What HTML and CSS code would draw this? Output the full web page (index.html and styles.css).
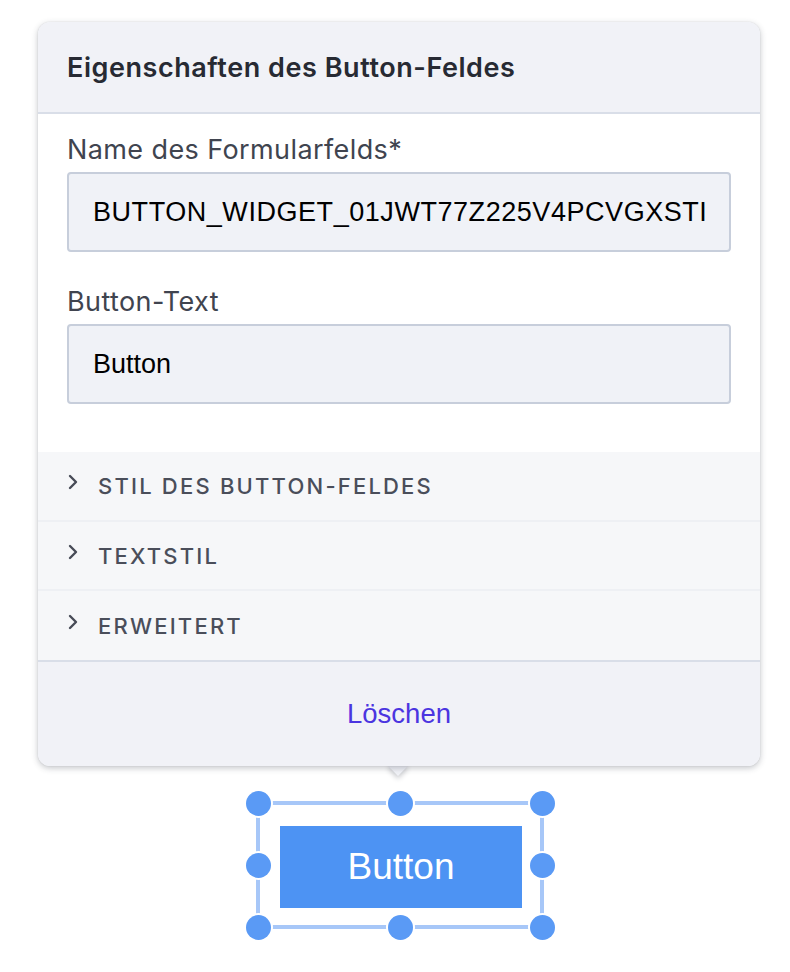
FILE: index.html
```html
<!DOCTYPE html>
<html lang="de">
<head>
<meta charset="utf-8">
<title>Eigenschaften des Button-Feldes</title>
<link rel="stylesheet" href="styles.css">
</head>
<body>
<div class="stage">
  <div class="popover">
    <div class="card">
      <div class="card-header">Eigenschaften des Button-Feldes</div>
      <div class="card-body">
        <label class="field-label">Name des Formularfelds*</label>
        <div class="field-input wide">BUTTON_WIDGET_01JWT77Z225V4PCVGXSTI</div>
        <label class="field-label second">Button-Text</label>
        <div class="field-input">Button</div>
      </div>
      <div class="sections">
        <div class="section-row">
          <svg class="chev" width="10" height="16" viewBox="0 0 10 16"><path d="M2 2 L8 8 L2 14" fill="none" stroke="#474b57" stroke-width="2.4" stroke-linecap="round" stroke-linejoin="round"/></svg>
          <span>STIL DES BUTTON-FELDES</span>
        </div>
        <div class="section-row">
          <svg class="chev" width="10" height="16" viewBox="0 0 10 16"><path d="M2 2 L8 8 L2 14" fill="none" stroke="#474b57" stroke-width="2.4" stroke-linecap="round" stroke-linejoin="round"/></svg>
          <span>TEXTSTIL</span>
        </div>
        <div class="section-row">
          <svg class="chev" width="10" height="16" viewBox="0 0 10 16"><path d="M2 2 L8 8 L2 14" fill="none" stroke="#474b57" stroke-width="2.4" stroke-linecap="round" stroke-linejoin="round"/></svg>
          <span>ERWEITERT</span>
        </div>
      </div>
      <div class="card-footer"><span class="delete">Löschen</span></div>
    </div>
    <div class="arrow"></div>
  </div>

  <div class="selection">
    <div class="sel-box">
      <div class="widget-btn">Button</div>
    </div>
    <span class="handle h-tl"></span>
    <span class="handle h-tm"></span>
    <span class="handle h-tr"></span>
    <span class="handle h-ml"></span>
    <span class="handle h-mr"></span>
    <span class="handle h-bl"></span>
    <span class="handle h-bm"></span>
    <span class="handle h-br"></span>
  </div>
</div>
</body>
</html>
```

FILE: styles.css
```css
* { box-sizing: border-box; }

html, body {
  margin: 0;
  padding: 0;
  background: #ffffff;
}

body {
  min-height: 972px;
  font-family: Inter, "Noto Sans", "Liberation Sans", sans-serif;
  color: #40444f;
}

.stage {
  width: 790px;
  padding-top: 22px;
  padding-bottom: 40px;
  display: flex;
  flex-direction: column;
  align-items: center;
}

.popover {
  position: relative;
  width: 722px;
  margin-left: 8px;
}

.card {
  position: relative;
  z-index: 2;
  width: 722px;
  border-radius: 12px;
  overflow: hidden;
  background: #ffffff;
  box-shadow: 0 2px 6px rgba(40, 45, 60, 0.28), 0 0 1px rgba(40, 45, 60, 0.25);
}

.card-header {
  height: 92px;
  padding-left: 29px;
  display: flex;
  align-items: center;
  background: #f1f2f7;
  border-bottom: 2px solid #d9dee8;
  font-size: 27px;
  font-weight: 600;
  color: #272a33;
  letter-spacing: 0.55px;
}

.card-body {
  padding: 18px 29px 48px;
  display: flex;
  flex-direction: column;
}

.field-label {
  display: block;
  font-size: 27px;
  line-height: 36px;
  margin-bottom: 4px;
  color: #40444f;
  letter-spacing: 0.4px;
}

.field-label.second {
  margin-top: 32px;
}

.field-input {
  height: 80px;
  padding: 0 24px;
  display: flex;
  align-items: center;
  background: #f0f2f7;
  border: 2px solid #c7cedb;
  border-radius: 4px;
  font-family: "Liberation Sans", Arial, sans-serif;
  font-size: 27px;
  color: #000000;
  white-space: nowrap;
  overflow: hidden;
}

.field-input.wide {
  letter-spacing: 0.55px;
}

.sections {
  background: #f6f7f9;
}

.section-row {
  height: 69px;
  padding-left: 30px;
  display: flex;
  align-items: center;
  gap: 20px;
  border-bottom: 2px solid #eef0f4;
  font-size: 22px;
  font-weight: 500;
  letter-spacing: 2.2px;
  color: #4a4e5a;
}

.section-row:first-child {
  height: 70px;
}

.section-row:last-child {
  height: 71px;
  border-bottom: 2px solid #d9dee8;
}

.chev {
  flex: none;
  margin-top: -8px;
}

.card-footer {
  height: 104px;
  display: flex;
  align-items: center;
  justify-content: center;
  background: #f1f2f7;
}

.delete {
  font-family: "Liberation Sans", Arial, sans-serif;
  font-size: 27.5px;
  color: #4b35e0;
}

.arrow {
  position: absolute;
  z-index: 1;
  left: 353px;
  bottom: -7px;
  width: 14px;
  height: 14px;
  background: #f1f2f7;
  transform: rotate(45deg);
  box-shadow: 2px 2px 5px rgba(40, 45, 60, 0.25);
}

.selection {
  position: relative;
  margin-top: 35px;
  margin-left: 10px;
  width: 288px;
  height: 128px;
}

.sel-box {
  width: 288px;
  height: 128px;
  border: 4px solid #a7c7f8;
  padding: 21px 18px 17px 20px;
}

.widget-btn {
  width: 242px;
  height: 82px;
  background: #4d93f3;
  display: flex;
  align-items: center;
  justify-content: center;
  font-family: "Liberation Sans", Arial, sans-serif;
  font-size: 37px;
  color: #ffffff;
}

.handle {
  position: absolute;
  width: 25px;
  height: 25px;
  border-radius: 50%;
  background: #5a9af5;
  box-shadow: 0 0 0 2px #ffffff;
}

.h-tl { left: -10.5px; top: -10.5px; }
.h-tm { left: 131.5px; top: -10.5px; }
.h-tr { right: -10.5px; top: -10.5px; }
.h-ml { left: -10.5px; top: 51.5px; }
.h-mr { right: -10.5px; top: 51.5px; }
.h-bl { left: -10.5px; bottom: -10.5px; }
.h-bm { left: 131.5px; bottom: -10.5px; }
.h-br { right: -10.5px; bottom: -10.5px; }
```
